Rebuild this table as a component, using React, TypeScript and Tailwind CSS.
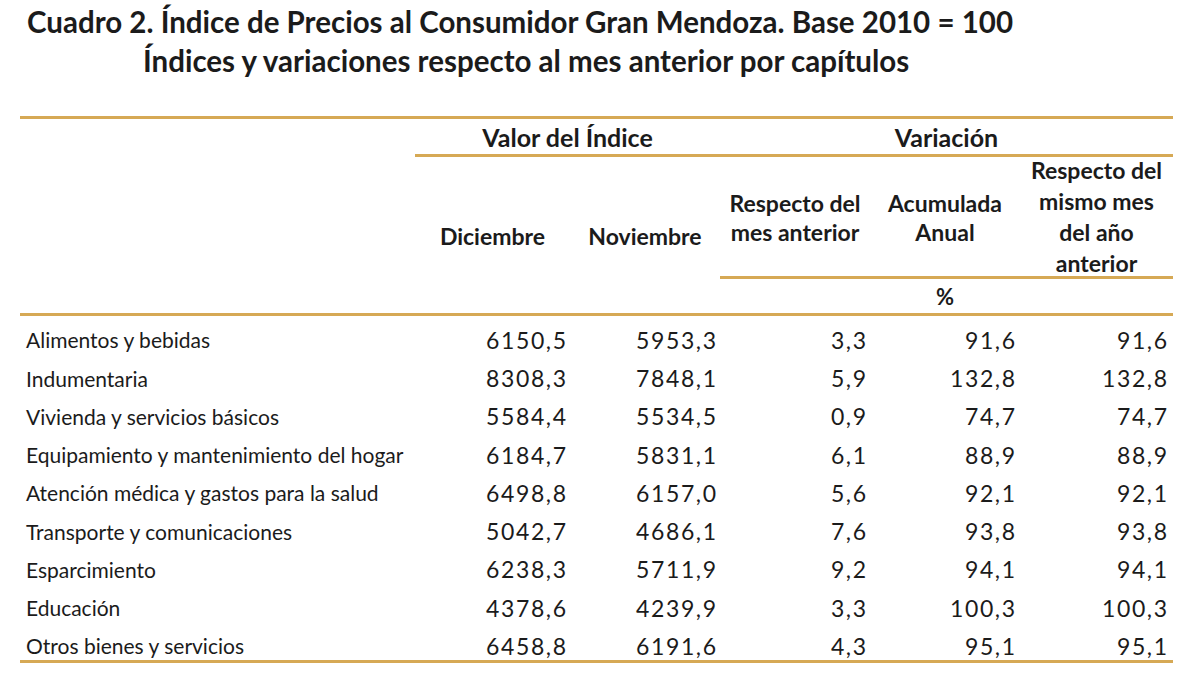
import React from "react";

const rows: [string, string, string, string, string, string][] = [
  ["Alimentos y bebidas", "6150,5", "5953,3", "3,3", "91,6", "91,6"],
  ["Indumentaria", "8308,3", "7848,1", "5,9", "132,8", "132,8"],
  ["Vivienda y servicios básicos", "5584,4", "5534,5", "0,9", "74,7", "74,7"],
  ["Equipamiento y mantenimiento del hogar", "6184,7", "5831,1", "6,1", "88,9", "88,9"],
  ["Atención médica y gastos para la salud", "6498,8", "6157,0", "5,6", "92,1", "92,1"],
  ["Transporte y comunicaciones", "5042,7", "4686,1", "7,6", "93,8", "93,8"],
  ["Esparcimiento", "6238,3", "5711,9", "9,2", "94,1", "94,1"],
  ["Educación", "4378,6", "4239,9", "3,3", "100,3", "100,3"],
  ["Otros bienes y servicios", "6458,8", "6191,6", "4,3", "95,1", "95,1"],
];

function Num({ v, w }: { v: string; w: string }) {
  return (
    <div className={`${w} text-right text-[23px] tracking-[1.6px]`}>
      <span className="mr-[-1.6px]">{v}</span>
    </div>
  );
}

export default function App() {
  return (
    <div
      className="w-[1200px] h-[687px] bg-white text-[#1b1b1b] overflow-hidden"
      style={{ fontFamily: "Lato, 'Open Sans', sans-serif" }}
    >
      <div className="pt-[2px] font-bold text-[29.5px] leading-[39px]">
        <div className="pl-[27px] whitespace-nowrap">
          Cuadro 2. Índice de Precios al Consumidor Gran Mendoza. Base 2010 = 100
        </div>
        <div className="pl-[143px] whitespace-nowrap">
          Índices y variaciones respecto al mes anterior por capítulos
        </div>
      </div>

      <div className="mt-[36px] ml-[20px] w-[1153px] border-t-[3px] border-[#d6a955]">
        {/* header */}
        <div className="flex font-bold border-b-[3px] border-[#d6a955]">
          <div className="w-[395px]" />
          <div className="w-[758px]">
            <div className="flex h-[38px] items-center border-b-[3px] border-[#d6a955] text-[25px] pt-[2px]">
              <div className="w-[305px] text-center">Valor del Índice</div>
              <div className="w-[453px] text-center">Variación</div>
            </div>
            <div className="flex h-[156px] text-[23px]">
              <div className="w-[155px] flex items-center justify-center pt-[2px]">Diciembre</div>
              <div className="w-[150px] flex items-center justify-center pt-[2px]">Noviembre</div>
              <div className="w-[453px] flex flex-col">
                <div className="h-[122px] flex leading-[29px] border-b-[3px] border-[#d6a955]">
                  <div className="w-[150px] flex items-center justify-center text-center pt-[3px]">
                    Respecto del
                    <br />
                    mes anterior
                  </div>
                  <div className="w-[150px] flex items-center justify-center text-center pt-[3px]">
                    Acumulada
                    <br />
                    Anual
                  </div>
                  <div className="w-[153px] flex items-center justify-center text-center leading-[31px] pt-[1px]">
                    Respecto del
                    <br />
                    mismo mes
                    <br />
                    del año
                    <br />
                    anterior
                  </div>
                </div>
                <div className="flex-1 flex items-center pt-[1px]">
                  <div className="w-[450px] text-center text-[22px]">%</div>
                </div>
              </div>
            </div>
          </div>
        </div>

        {/* body */}
        <div className="h-[347px] pt-[5px] border-b-[3px] border-[#d6a955]">
          {rows.map((r) => (
            <div key={r[0]} className="flex h-[38.25px] items-center">
              <div className="w-[395px] pl-[6px] text-[21px] whitespace-nowrap">{r[0]}</div>
              <Num v={r[1]} w="w-[151px]" />
              <Num v={r[2]} w="w-[150px]" />
              <Num v={r[3]} w="w-[150px]" />
              <Num v={r[4]} w="w-[149px]" />
              <Num v={r[5]} w="w-[152px]" />
            </div>
          ))}
        </div>
      </div>
    </div>
  );
}
